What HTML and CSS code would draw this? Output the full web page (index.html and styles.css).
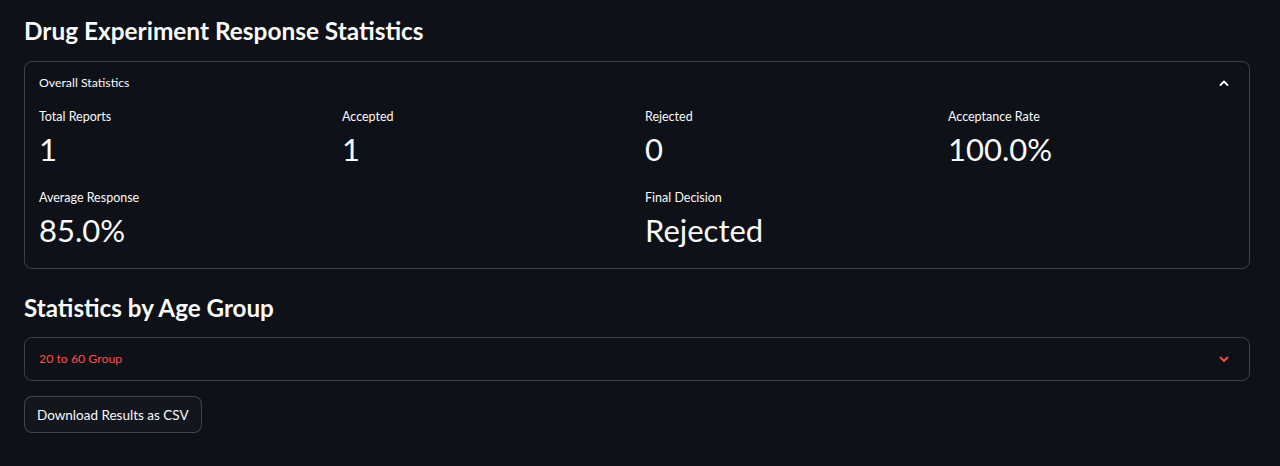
FILE: index.html
```html
<!DOCTYPE html>
<html lang="en">
<head>
<meta charset="utf-8">
<title>Drug Experiment Response Statistics</title>
<link rel="stylesheet" href="styles.css">
</head>
<body>
<main class="page">
  <h2 class="heading heading-first">Drug Experiment Response Statistics</h2>
  <section class="expander">
    <div class="exp-header">
      <span class="exp-title">Overall Statistics</span>
      <svg class="chev" width="16" height="16" viewBox="0 0 16 16"><polyline points="4.5,10 8,6.5 11.5,10" fill="none" stroke="#fafafa" stroke-width="1.8" stroke-linecap="round" stroke-linejoin="round"/></svg>
    </div>
    <div class="exp-body">
      <div class="cols4">
        <div class="metric"><div class="m-label">Total Reports</div><div class="m-value">1</div></div>
        <div class="metric"><div class="m-label">Accepted</div><div class="m-value">1</div></div>
        <div class="metric"><div class="m-label">Rejected</div><div class="m-value">0</div></div>
        <div class="metric"><div class="m-label">Acceptance Rate</div><div class="m-value">100.0%</div></div>
      </div>
      <div class="cols2">
        <div class="metric"><div class="m-label">Average Response</div><div class="m-value">85.0%</div></div>
        <div class="metric"><div class="m-label">Final Decision</div><div class="m-value">Rejected</div></div>
      </div>
    </div>
  </section>
  <h2 class="heading heading-second">Statistics by Age Group</h2>
  <section class="expander">
    <div class="exp-header">
      <span class="exp-title red">20 to 60 Group</span>
      <svg class="chev" width="16" height="16" viewBox="0 0 16 16"><polyline points="4.5,6.5 8,10 11.5,6.5" fill="none" stroke="#ff4b4b" stroke-width="1.8" stroke-linecap="round" stroke-linejoin="round"/></svg>
    </div>
  </section>
  <button class="btn" type="button">Download Results as CSV</button>
</main>
</body>
</html>
```
FILE: styles.css
```css
* { box-sizing: border-box; }
html, body { margin: 0; padding: 0; background: #0e1117; }
body {
  color: #fafafa;
  font-family: "Source Sans Pro", "Lato", "Noto Sans", sans-serif;
}
.page {
  padding: 0 30px 30px 24px;
  display: flex;
  flex-direction: column;
  align-items: stretch;
}
.heading {
  margin: 0;
  font-size: 24.4px;
  font-weight: 700;
  line-height: 34px;
  color: #fafafa;
}
.heading-first { padding-top: 14px; margin-bottom: 13px; }
.heading-second { margin-top: 22px; margin-bottom: 13px; font-size: 24.2px; line-height: 33px; }
.expander {
  border: 1px solid rgba(250, 250, 250, 0.2);
  border-radius: 8px;
}
.exp-header {
  display: flex;
  align-items: center;
  justify-content: space-between;
  padding: 12px 17px 12px 14px;
  height: 42px;
}
.exp-title {
  font-size: 12.3px;
  line-height: 18px;
}
.red { color: #ff4b4b; }
.chev { display: block; }
.exp-body {
  padding: 3px 14px 16px 14px;
  display: flex;
  flex-direction: column;
  gap: 17px;
}
.cols4 {
  display: grid;
  grid-template-columns: repeat(4, 1fr);
  gap: 16px;
}
.cols2 {
  display: grid;
  grid-template-columns: repeat(2, 1fr);
  gap: 16px;
}
.m-label {
  font-size: 12.5px;
  line-height: 20px;
}
.m-value {
  font-size: 31px;
  line-height: 44px;
}
.btn {
  align-self: flex-start;
  margin-top: 15px;
  height: 37px;
  padding: 0 12px;
  font-family: inherit;
  font-size: 13.5px;
  color: #fafafa;
  background: #13161d;
  border: 1px solid rgba(250, 250, 250, 0.2);
  border-radius: 8px;
}
```
